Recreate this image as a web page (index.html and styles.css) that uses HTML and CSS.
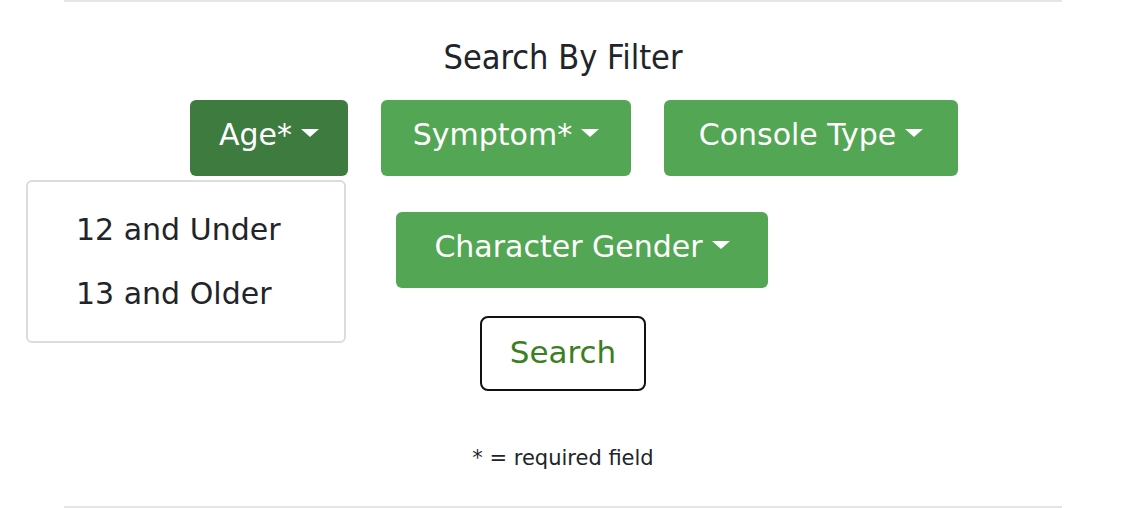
FILE: index.html
```html
<!DOCTYPE html>
<html lang="en">
<head>
<meta charset="utf-8">
<title>Search By Filter</title>
<link rel="stylesheet" href="styles.css">
</head>
<body>
<div class="page">
  <h2 class="title">Search By Filter</h2>
  <div class="filter-row row-one">
    <div class="dropdown">
      <button class="btn btn-active w-age">Age*<span class="caret"></span></button>
      <div class="dropdown-menu">
        <a class="dropdown-item">12 and Under</a>
        <a class="dropdown-item">13 and Older</a>
      </div>
    </div>
    <div class="dropdown">
      <button class="btn w-symptom">Symptom*<span class="caret"></span></button>
    </div>
    <div class="dropdown">
      <button class="btn w-console">Console Type<span class="caret"></span></button>
    </div>
  </div>
  <div class="filter-row row-two">
    <div class="dropdown">
      <button class="btn w-gender">Character Gender<span class="caret"></span></button>
    </div>
  </div>
  <div class="search-row">
    <button class="btn-search">Search</button>
  </div>
  <p class="note">* = required field</p>
</div>
</body>
</html>
```

FILE: styles.css
```css
* { box-sizing: border-box; }

body {
  margin: 0;
  background: #ffffff;
  font-family: "DejaVu Sans", "Liberation Sans", sans-serif;
  color: #212529;
}

.page {
  margin-left: 64px;
  width: 998px;
  height: 508px;
  border-top: 2px solid #e5e5e5;
  border-bottom: 2px solid #e5e5e5;
  display: flex;
  flex-direction: column;
  align-items: stretch;
}

.title {
  margin: 39px 0 0;
  font-size: 34px;
  font-stretch: condensed;
  font-weight: 400;
  line-height: 32px;
  text-align: center;
  color: #212529;
}

.filter-row {
  display: flex;
  justify-content: center;
}

.row-one {
  margin-top: 27px;
  padding-left: 22px;
  gap: 33px;
}

.row-two {
  margin-top: 36px;
  padding-left: 38px;
}

.dropdown {
  position: relative;
}

.btn {
  display: inline-flex;
  align-items: center;
  justify-content: center;
  gap: 9px;
  height: 76px;
  padding: 0 0 6px;
  border: none;
  border-radius: 6px;
  background: #53a653;
  color: #ffffff;
  font-family: inherit;
  font-size: 30px;
  line-height: 44px;
}

.btn-active {
  background: #3d7b3f;
}

.caret {
  width: 0;
  height: 0;
  border-top: 8px solid #ffffff;
  border-left: 9px solid transparent;
  border-right: 9px solid transparent;
  margin-bottom: 4px;
}

.w-age { width: 158px; }
.w-symptom { width: 250px; }
.w-console { width: 294px; }
.w-gender { width: 372px; }

.dropdown-menu {
  position: absolute;
  top: 80px;
  right: 2px;
  width: 320px;
  padding: 16px 0 15px;
  background: #ffffff;
  border: 2px solid #dcdcdc;
  border-radius: 6px;
  z-index: 2;
}

.dropdown-item {
  display: block;
  padding: 9px 48px 10px;
  font-size: 30px;
  line-height: 45px;
  color: #212529;
  white-space: nowrap;
}

.search-row {
  margin-top: 28px;
  display: flex;
  justify-content: center;
}

.btn-search {
  width: 166px;
  height: 75px;
  padding: 0 0 4px;
  border: 2px solid #111111;
  border-radius: 8px;
  background: #ffffff;
  color: #3a7f22;
  font-family: inherit;
  font-size: 31px;
  line-height: 44px;
}

.note {
  margin: 55px 0 0;
  font-size: 21px;
  line-height: 24px;
  text-align: center;
  color: #212529;
}
```
